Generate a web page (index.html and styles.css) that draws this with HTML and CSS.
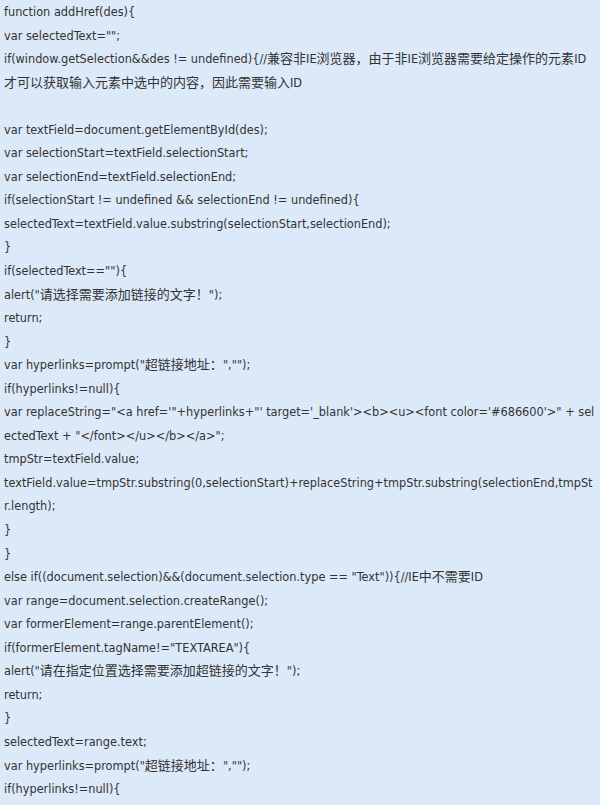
FILE: index.html
```html
<!DOCTYPE html>
<html>
<head>
<meta charset="utf-8">
<link rel="stylesheet" href="styles.css">
</head>
<body>
<div class="code">
<div class="ln">function addHref(des){</div>
<div class="ln">var selectedText="";</div>
<div class="ln">if(window.getSelection&amp;&amp;des != undefined){//<span class="cn">兼容非</span>IE<span class="cn">浏览器，由于非</span>IE<span class="cn">浏览器需要给定操作的元素</span>ID</div>
<div class="ln"><span class="cn">才可以获取输入元素中选中的内容，因此需要输入</span>ID</div>
<div class="ln">&nbsp;</div>
<div class="ln">var textField=document.getElementById(des);</div>
<div class="ln">var selectionStart=textField.selectionStart;</div>
<div class="ln">var selectionEnd=textField.selectionEnd;</div>
<div class="ln">if(selectionStart != undefined &amp;&amp; selectionEnd != undefined){</div>
<div class="ln">selectedText=textField.value.substring(selectionStart,selectionEnd);</div>
<div class="ln">}</div>
<div class="ln">if(selectedText==""){</div>
<div class="ln">alert("<span class="cn">请选择需要添加链接的文字！</span>");</div>
<div class="ln">return;</div>
<div class="ln">}</div>
<div class="ln">var hyperlinks=prompt("<span class="cn">超链接地址：</span>","");</div>
<div class="ln">if(hyperlinks!=null){</div>
<div class="ln">var replaceString="&lt;a href='"+hyperlinks+"' target='_blank'&gt;&lt;b&gt;&lt;u&gt;&lt;font color='#686600'&gt;" + sel</div>
<div class="ln">ectedText + "&lt;/font&gt;&lt;/u&gt;&lt;/b&gt;&lt;/a&gt;";</div>
<div class="ln">tmpStr=textField.value;</div>
<div class="ln">textField.value=tmpStr.substring(0,selectionStart)+replaceString+tmpStr.substring(selectionEnd,tmpSt</div>
<div class="ln">r.length);</div>
<div class="ln">}</div>
<div class="ln">}</div>
<div class="ln">else if((document.selection)&amp;&amp;(document.selection.type == "Text")){//IE<span class="cn">中不需要</span>ID</div>
<div class="ln">var range=document.selection.createRange();</div>
<div class="ln">var formerElement=range.parentElement();</div>
<div class="ln">if(formerElement.tagName!="TEXTAREA"){</div>
<div class="ln">alert("<span class="cn">请在指定位置选择需要添加超链接的文字！</span>");</div>
<div class="ln">return;</div>
<div class="ln">}</div>
<div class="ln">selectedText=range.text;</div>
<div class="ln">var hyperlinks=prompt("<span class="cn">超链接地址：</span>","");</div>
<div class="ln">if(hyperlinks!=null){</div>
</div>
</body>
</html>
```
FILE: styles.css
```css
html, body {
  margin: 0;
  padding: 0;
  background: #dce9f9;
}
.code {
  padding: 0 0 0 4px;
  font-family: "DejaVu Sans Condensed", "DejaVu Sans", "Noto Sans CJK SC", sans-serif;
  font-size: 12.6px;
  line-height: 23.56px;
  color: #333333;
  height: 805px;
  overflow: hidden;
}
.ln {
  white-space: nowrap;
  height: 23.56px;
}
.cn {
  font-family: "Noto Sans CJK SC", sans-serif;
  font-size: 13px;
  line-height: 0;
}
```
